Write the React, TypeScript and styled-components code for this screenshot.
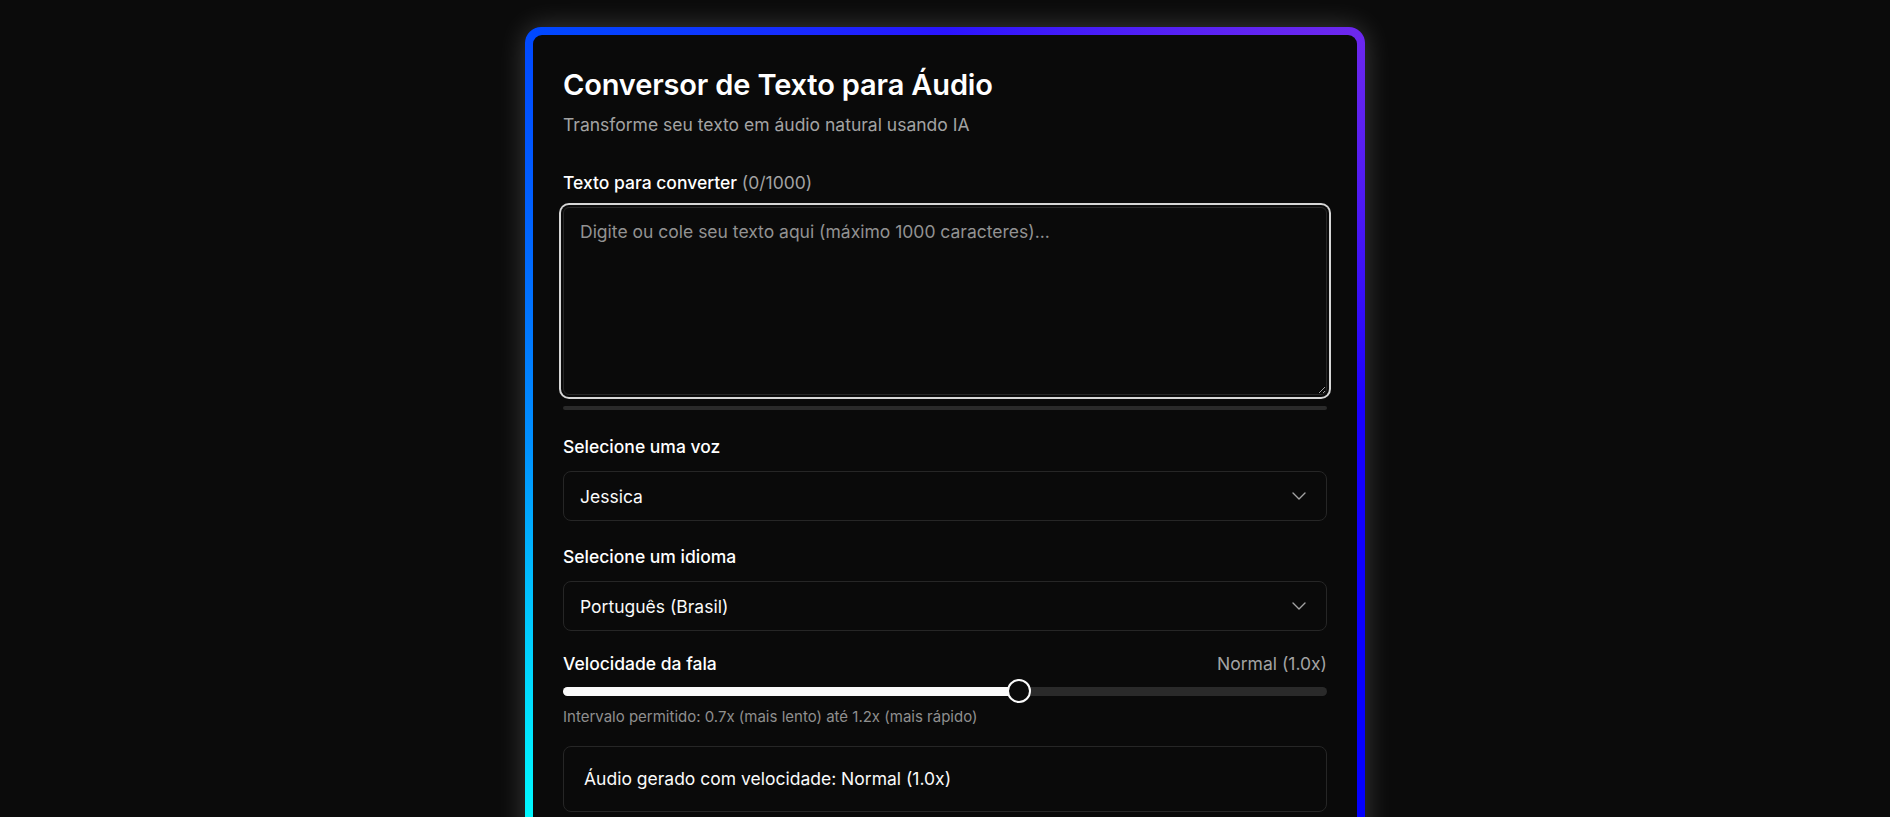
import React, { useState } from "react";
import styled, { createGlobalStyle } from "styled-components";

const GlobalStyle = createGlobalStyle`
  * {
    box-sizing: border-box;
  }
  body {
    margin: 0;
    background: #0b0b0b;
    font-family: Inter, "Noto Sans", "Liberation Sans", sans-serif;
    color: #fafafa;
    overflow: hidden;
  }
`;

const Page = styled.main`
  display: flex;
  justify-content: center;
  padding: 27px 0 40px;
  min-height: 100vh;
`;

const Frame = styled.div`
  width: 840px;
  padding: 8px;
  border-radius: 16px;
  background: conic-gradient(
    from 0deg at 50% 50%,
    #2a14ff 0deg,
    #6d28ee 45deg,
    #1a00ff 85deg,
    #0000ff 140deg,
    #00ffff 225deg,
    #0090ff 270deg,
    #0048ff 315deg,
    #2a14ff 360deg
  );
  box-shadow: 0 0 28px rgba(255, 255, 255, 0.2);
`;

const Card = styled.section`
  background: #0a0a0a;
  border-radius: 9px;
  padding: 32px 30px 40px;
  display: flex;
  flex-direction: column;
`;

const Title = styled.h1`
  margin: 0;
  font-size: 29px;
  line-height: 36px;
  font-weight: 600;
  letter-spacing: -0.15px;
  color: #fff;
`;

const Subtitle = styled.p`
  margin: 8px 0 0;
  font-size: 17.5px;
  line-height: 28px;
  color: #a3a3a3;
`;

const Field = styled.div<{ $top: number }>`
  margin-top: ${(p) => p.$top}px;
  display: flex;
  flex-direction: column;
`;

const LabelRow = styled.div<{ $gap?: number }>`
  display: flex;
  justify-content: space-between;
  align-items: center;
  margin-bottom: ${(p) => p.$gap ?? 12}px;
`;

const Label = styled.label`
  font-size: 17.5px;
  line-height: 24px;
  font-weight: 500;
  color: #fff;
`;

const Muted = styled.span`
  font-size: 17.5px;
  line-height: 24px;
  font-weight: 400;
  color: #a3a3a3;
`;

const TextArea = styled.textarea`
  width: 100%;
  height: 188px;
  resize: vertical;
  padding: 12px 16px;
  border: 1px solid #262626;
  border-radius: 6px;
  background: #0a0a0a;
  color: #fafafa;
  font-family: inherit;
  font-size: 17.5px;
  line-height: 24px;
  outline: none;
  box-shadow: 0 0 0 2px #0a0a0a, 0 0 0 4px #d6d6d6;
  &::placeholder {
    color: #929292;
  }
`;

const CountBar = styled.div`
  margin-top: 11px;
  height: 4px;
  border-radius: 2px;
  background: #2a2a2a;
  overflow: hidden;
`;

const CountFill = styled.div`
  height: 100%;
  background: #fafafa;
`;

const SelectBox = styled.button`
  display: flex;
  align-items: center;
  justify-content: space-between;
  width: 100%;
  height: 50px;
  padding: 0 20px 0 16px;
  border: 1px solid #262626;
  border-radius: 8px;
  background: #0a0a0a;
  color: #fafafa;
  font-family: inherit;
  font-size: 17.5px;
  text-align: left;
  cursor: pointer;
`;

const Chevron = () => (
  <svg width="14" height="8" viewBox="0 0 14 8" fill="none">
    <path
      d="M1 1l6 6 6-6"
      stroke="#a3a3a3"
      strokeWidth="1.4"
      strokeLinecap="round"
      strokeLinejoin="round"
    />
  </svg>
);

const SliderWrap = styled.div`
  position: relative;
  height: 24px;
  display: flex;
  align-items: center;
`;

const Track = styled.div`
  width: 100%;
  height: 9px;
  border-radius: 5px;
  background: #2a2a2a;
  overflow: hidden;
`;

const Fill = styled.div`
  height: 100%;
  background: #fafafa;
`;

const Thumb = styled.div`
  position: absolute;
  top: 0;
  width: 24px;
  height: 24px;
  border-radius: 50%;
  background: #0a0a0a;
  border: 2px solid #fafafa;
`;

const Hint = styled.p`
  margin: 4px 0 0;
  font-size: 15px;
  line-height: 20px;
  color: #8f8f8f;
`;

const Result = styled.div`
  margin-top: 19px;
  padding: 20px;
  border: 1px solid #262626;
  border-radius: 8px;
  background: #0a0a0a;
  font-size: 17.5px;
  line-height: 24px;
  color: #fafafa;
`;

const MIN = 0.7;
const MAX = 1.2;

export default function App() {
  const [text, setText] = useState("");
  const [speed] = useState(1.0);
  const frac = (speed - MIN) / (MAX - MIN);
  const speedLabel = `Normal (${speed.toFixed(1)}x)`;

  return (
    <>
      <GlobalStyle />
      <Page>
        <Frame>
          <Card>
            <Title>Conversor de Texto para Áudio</Title>
            <Subtitle>Transforme seu texto em áudio natural usando IA</Subtitle>

            <Field $top={32}>
              <LabelRow>
                <Label>
                  Texto para converter <Muted>({text.length}/1000)</Muted>
                </Label>
              </LabelRow>
              <TextArea
                value={text}
                maxLength={1000}
                onChange={(e) => setText(e.target.value)}
                placeholder="Digite ou cole seu texto aqui (máximo 1000 caracteres)..."
              />
              <CountBar>
                <CountFill style={{ width: `${(text.length / 1000) * 100}%` }} />
              </CountBar>
            </Field>

            <Field $top={25}>
              <LabelRow>
                <Label>Selecione uma voz</Label>
              </LabelRow>
              <SelectBox>
                Jessica
                <Chevron />
              </SelectBox>
            </Field>

            <Field $top={24}>
              <LabelRow>
                <Label>Selecione um idioma</Label>
              </LabelRow>
              <SelectBox>
                Português (Brasil)
                <Chevron />
              </SelectBox>
            </Field>

            <Field $top={21}>
              <LabelRow $gap={3}>
                <Label>Velocidade da fala</Label>
                <Muted>{speedLabel}</Muted>
              </LabelRow>
              <SliderWrap>
                <Track>
                  <Fill style={{ width: `calc(12px + ${frac} * (100% - 24px))` }} />
                </Track>
                <Thumb style={{ left: `calc(${frac} * (100% - 24px))` }} />
              </SliderWrap>
              <Hint>Intervalo permitido: 0.7x (mais lento) até 1.2x (mais rápido)</Hint>
            </Field>

            <Result>Áudio gerado com velocidade: {speedLabel}</Result>
          </Card>
        </Frame>
      </Page>
    </>
  );
}
